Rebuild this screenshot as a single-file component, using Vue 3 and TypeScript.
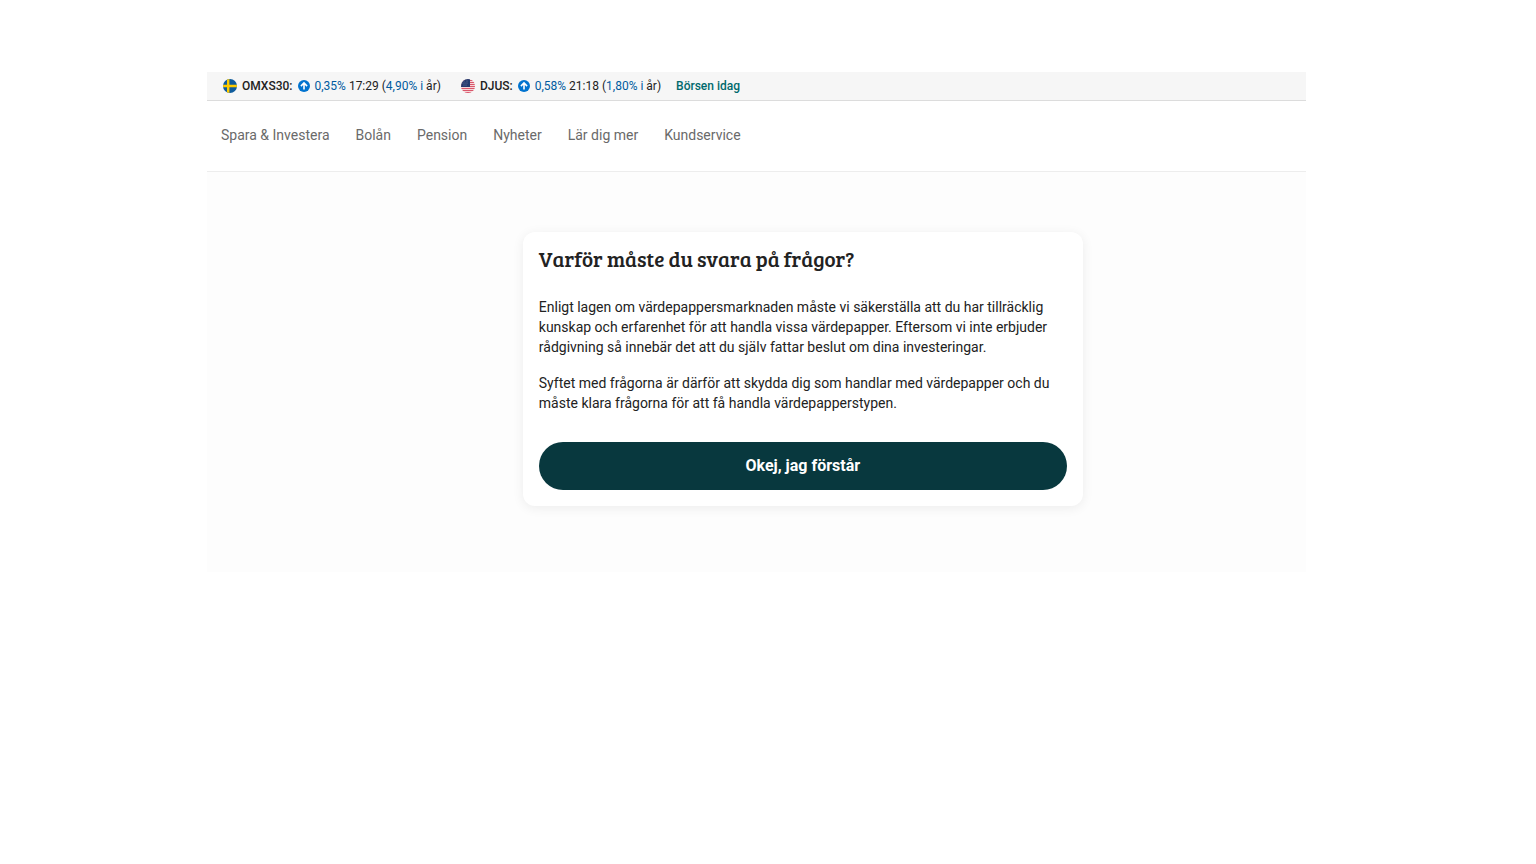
<script setup lang="ts">
interface Quote {
  name: string
  flag: 'se' | 'us'
  change: string
  time: string
  year: string
}

const quotes: Quote[] = [
  { name: 'OMXS30:', flag: 'se', change: '0,35%', time: '17:29', year: '4,90%' },
  { name: 'DJUS:', flag: 'us', change: '0,58%', time: '21:18', year: '1,80%' },
]

const links: string[] = ['Spara & Investera', 'Bolån', 'Pension', 'Nyheter', 'Lär dig mer', 'Kundservice']
const stripes: number[] = [1, 3, 5, 7, 9, 11, 13]
const stars: number[][] = [[3, 2], [6, 2], [2, 4], [4, 4], [6, 4], [3, 6], [5, 6]]
</script>

<template>
  <div class="page">
    <header>
      <div class="ticker">
        <div v-for="q in quotes" :key="q.name" class="quote">
          <svg v-if="q.flag === 'se'" class="flag" viewBox="0 0 14 14" aria-hidden="true">
            <clipPath id="clip-se"><circle cx="7" cy="7" r="7" /></clipPath>
            <g clip-path="url(#clip-se)">
              <path fill="#0f5c9c" d="M0 0h14v14H0z" />
              <path fill="#fecb00" d="M4 0h2.4v14H4zM0 5.8h14v2.4H0z" />
            </g>
          </svg>
          <svg v-else class="flag" viewBox="0 0 14 14" aria-hidden="true">
            <clipPath id="clip-us"><circle cx="7" cy="7" r="7" /></clipPath>
            <g clip-path="url(#clip-us)">
              <path fill="#f5d5d9" d="M0 0h14v14H0z" />
              <rect v-for="y in stripes" :key="y" x="0" :y="y" width="14" height="1" fill="#d9566a" />
              <path fill="#253a6e" d="M0 0h9v8H0z" />
              <circle v-for="(s, i) in stars" :key="i" :cx="s[0]" :cy="s[1]" r=".4" fill="#b4bdd4" />
            </g>
          </svg>
          <span class="name">{{ q.name }}</span>
          <svg class="arrow" viewBox="0 0 12 12" aria-hidden="true">
            <circle cx="6" cy="6" r="6" fill="#0073cf" />
            <path d="M6 9.6V3M2.9 6.1L6 3l3.1 3.1" fill="none" stroke="#fff" stroke-width="1.6" />
          </svg>
          <span><span class="up">{{ q.change }}</span> {{ q.time }} (<span class="up">{{ q.year }} i</span> år)</span>
        </div>
        <a class="today" href="#">Börsen idag</a>
      </div>
      <nav>
        <a v-for="link in links" :key="link" href="#">{{ link }}</a>
      </nav>
    </header>
    <main>
      <section class="card">
        <h1>Varför måste du svara på frågor?</h1>
        <p>Enligt lagen om värdepappersmarknaden måste vi säkerställa att du har tillräcklig kunskap och erfarenhet för att handla vissa värdepapper. Eftersom vi inte erbjuder rådgivning så innebär det att du själv fattar beslut om dina investeringar.</p>
        <p>Syftet med frågorna är därför att skydda dig som handlar med värdepapper och du måste klara frågorna för att få handla värdepapperstypen.</p>
        <button type="button">Okej, jag förstår</button>
      </section>
    </main>
  </div>
</template>

<style>
body {
  margin: 0;
  background: #fff;
}
</style>

<style scoped>
.page {
  margin: 72px 15% 72px 207px;
  color: #222;
  font-family: Roboto, "Liberation Sans", sans-serif;
  font-size: 14px;
  line-height: 20px;
}
a {
  text-decoration: none;
}
.ticker {
  display: flex;
  align-items: center;
  padding: 4px 16px;
  background: #f6f6f6;
  border-bottom: 1px solid #dcdcdc;
  font-size: 12px;
}
.quote {
  display: flex;
  align-items: center;
  gap: 5px;
  margin-right: 20px;
}
.quote:nth-child(2) {
  margin-right: 15px;
}
.flag {
  width: 14px;
  height: 14px;
}
.arrow {
  width: 12px;
  height: 12px;
}
.name,
.today {
  font-weight: 500;
}
.up {
  color: #005b9f;
}
.today {
  color: #006a6d;
}
nav {
  display: flex;
  gap: 26px;
  padding: 24px 14px 26px;
  border-bottom: 1px solid #ededed;
}
nav a {
  color: #6a6a6a;
}
main {
  display: flex;
  justify-content: center;
  padding: 60px 0 66px 93px;
  background: #fdfdfd;
}
.card {
  box-sizing: border-box;
  width: 100%;
  max-width: 560px;
  padding: 16px;
  border-radius: 12px;
  background: #fff;
  box-shadow: 0 2px 12px rgba(0, 0, 0, 0.07);
}
h1 {
  margin: 0 0 27px;
  font-family: "Bree Serif", "Liberation Serif", serif;
  font-size: 21px;
  font-weight: 400;
  line-height: 22px;
}
p {
  margin: 0 0 16px;
}
button {
  display: block;
  width: 100%;
  height: 48px;
  margin-top: 29px;
  padding: 0 0 2px;
  border: 0;
  border-radius: 24px;
  background: #08383e;
  color: #fff;
  font-family: inherit;
  font-size: 16px;
  font-weight: 700;
  cursor: pointer;
}
</style>
